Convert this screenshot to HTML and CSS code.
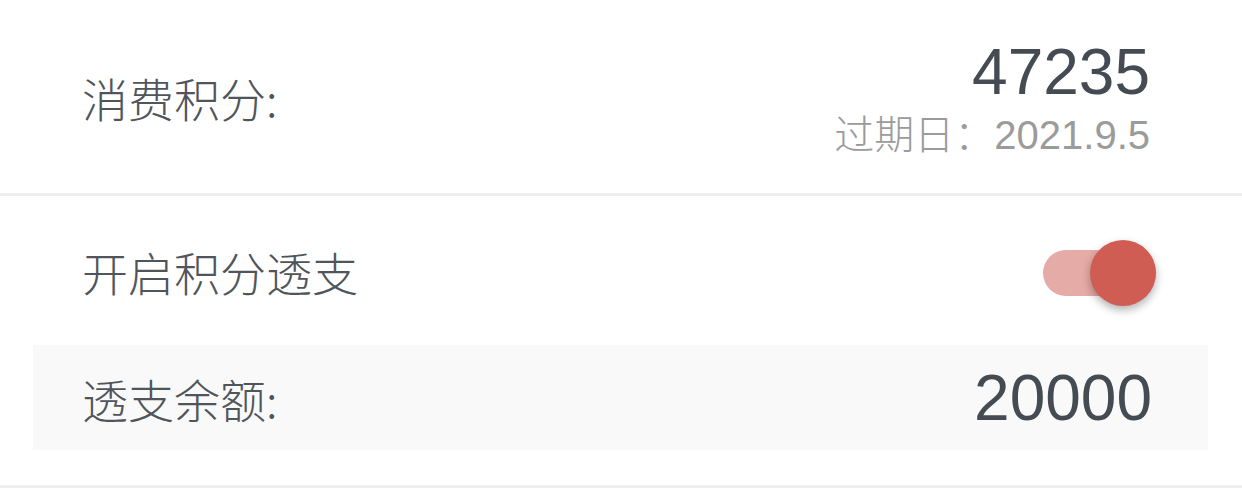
FILE: index.html
```html
<!DOCTYPE html>
<html lang="zh-CN">
<head>
    <meta charset="UTF-8">
    <meta name="viewport" content="width=device-width, initial-scale=1.0">
    <title>积分</title>
    <link rel="stylesheet" href="styles.css">
</head>
<body>
    <div class="points-row">
        <div class="label">消费积分:</div>
        <div class="points-info">
            <div class="points-value">47235</div>
            <div class="expire"><span class="expire-label">过期日：</span>2021.9.5</div>
        </div>
    </div>
    <div class="overdraft">
        <div class="switch-row">
            <div class="label">开启积分透支</div>
            <div class="switch on">
                <div class="switch-track"></div>
                <div class="switch-knob"></div>
            </div>
        </div>
        <div class="balance-box">
            <div class="label">透支余额:</div>
            <div class="balance-value">20000</div>
        </div>
    </div>
</body>
</html>
```

FILE: styles.css
```css
body {
    margin: 0;
    background: #fff;
    font-family: "Liberation Sans", "Noto Sans CJK SC", sans-serif;
    color: #4a4f55;
}
.label {
    font-family: "Noto Sans CJK SC", sans-serif;
    font-size: 46px;
    font-weight: 300;
    color: #50555b;
}
.points-row {
    height: 193px;
    display: flex;
    align-items: center;
    justify-content: space-between;
    padding: 0 92px 0 82px;
    border-bottom: 3px solid #eeeeee;
}
.points-info {
    text-align: right;
    padding-top: 2px;
}
.points-value {
    font-size: 64px;
    line-height: 72px;
    color: #454b52;
}
.expire {
    font-size: 40px;
    line-height: 48px;
    color: #9b9b9b;
}
.expire-label {
    font-family: "Noto Sans CJK SC", sans-serif;
    font-weight: 300;
}
.overdraft {
    padding-bottom: 35px;
    border-bottom: 3px solid #eeeeee;
}
.switch-row {
    height: 149px;
    display: flex;
    align-items: center;
    justify-content: space-between;
    padding: 0 86px 0 82px;
}
.switch {
    position: relative;
    width: 113px;
    height: 66px;
    margin-top: 4px;
}
.switch-track {
    position: absolute;
    left: 0;
    right: 0;
    top: 10px;
    height: 46px;
    border-radius: 23px;
    background: #e5aba6;
}
.switch-knob {
    position: absolute;
    right: 0;
    top: 0;
    width: 66px;
    height: 66px;
    border-radius: 50%;
    background: #d05d53;
    box-shadow: 0 4px 8px rgba(0, 0, 0, 0.3);
}
.balance-box {
    margin: 0 34px 0 33px;
    height: 105px;
    background: #f9f9f9;
    display: flex;
    align-items: center;
    justify-content: space-between;
    padding: 0 56px 0 49px;
}
.balance-value {
    font-size: 64px;
    color: #454b52;
}
```
